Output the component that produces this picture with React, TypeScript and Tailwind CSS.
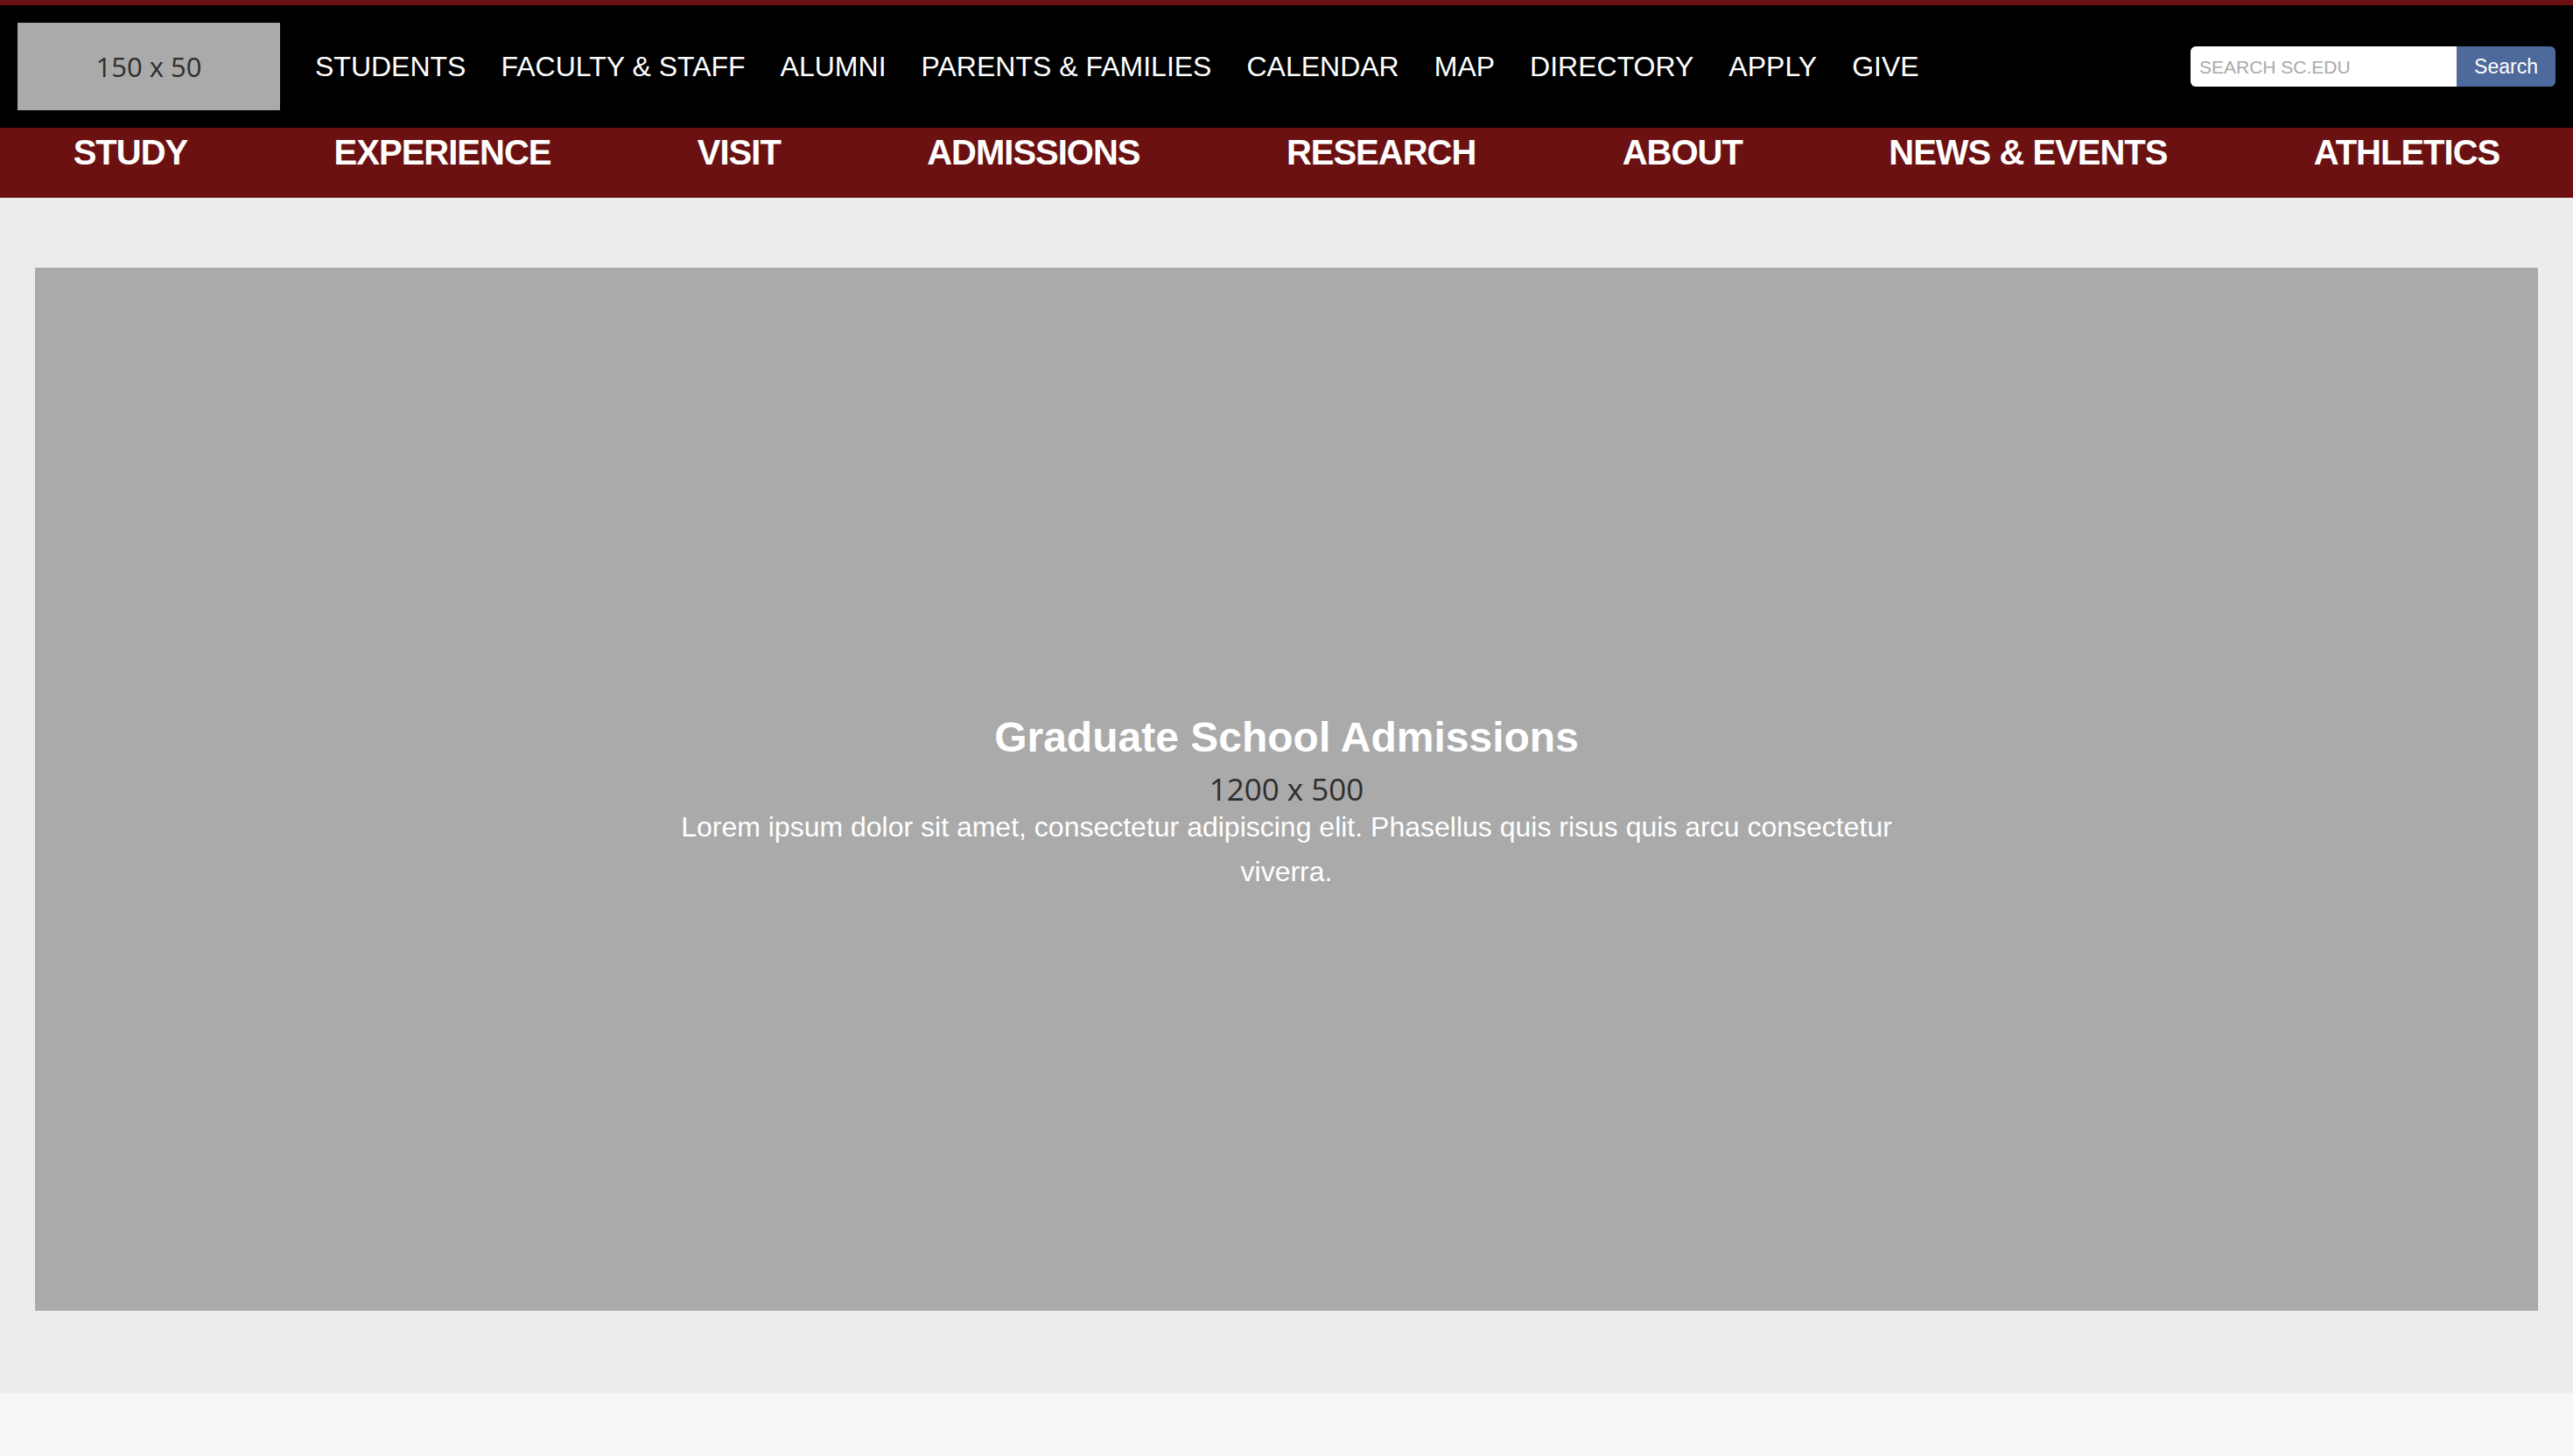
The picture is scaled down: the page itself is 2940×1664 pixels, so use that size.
const utilityLinks = ['Students', 'Faculty & Staff', 'Alumni', 'Parents & Families', 'Calendar', 'Map', 'Directory', 'Apply', 'Give']

const mainLinks = ['Study', 'Experience', 'Visit', 'Admissions', 'Research', 'About', 'News & Events', 'Athletics']

function Placeholder({ label, className }: { label: string; className: string }) {
  return (
    <div className={`flex items-center justify-center bg-[#aaaaaa] text-[#2e2e2e] font-['Open_Sans',sans-serif] ${className}`}>
      {label}
    </div>
  )
}

function TopBar() {
  return (
    <header className="flex h-[146px] items-center border-t-[6px] border-[#6b1111] bg-black px-[20px]">
      <Placeholder label="150 x 50" className="h-[100px] w-[300px] shrink-0 text-[31px]" />
      <nav className="ml-[40px] flex gap-[40px] text-[32px] uppercase text-white">
        {utilityLinks.map(link => (
          <a key={link} href="#" className="whitespace-nowrap">{link}</a>
        ))}
      </nav>
      <form className="ml-auto flex h-[46px]" onSubmit={e => e.preventDefault()}>
        <input
          type="text"
          placeholder="SEARCH SC.EDU"
          className="w-[304px] rounded-l-[6px] bg-white px-[10px] pt-[2px] text-[21px] text-black outline-none placeholder:text-[#a9a9a9]"
        />
        <button type="submit" className="w-[113px] rounded-r-[6px] bg-[#4e6a9c] text-[23px] text-white">
          Search
        </button>
      </form>
    </header>
  )
}

function MainNav() {
  return (
    <nav className="flex h-[80px] items-start justify-around bg-[#6b1111] pt-[11px]">
      {mainLinks.map(link => (
        <a key={link} href="#" className="whitespace-nowrap text-[40px] font-bold uppercase leading-[34px] tracking-[-1px] text-white">
          {link}
        </a>
      ))}
    </nav>
  )
}

function Hero() {
  return (
    <section className="bg-[#ececec] px-[40px] pb-[94px] pt-[80px]">
      <div className="relative">
        <Placeholder label="1200 x 500" className="h-[1192px] w-full text-[35px]" />
        <div className="absolute inset-x-0 top-[509px] flex flex-col items-center text-center text-white">
          <h1 className="text-[48px] font-bold leading-[55px]">Graduate School Admissions</h1>
          <p className="mt-[50px] max-w-[1440px] text-[32px] leading-[51px]">
            Lorem ipsum dolor sit amet, consectetur adipiscing elit. Phasellus quis risus quis arcu consectetur viverra.
          </p>
        </div>
      </div>
    </section>
  )
}

export default function App() {
  return (
    <div className="flex min-h-screen flex-col font-['Liberation_Sans',Arial,sans-serif]">
      <TopBar />
      <MainNav />
      <Hero />
      <footer className="flex-1 bg-[#f7f7f7]" />
    </div>
  )
}
